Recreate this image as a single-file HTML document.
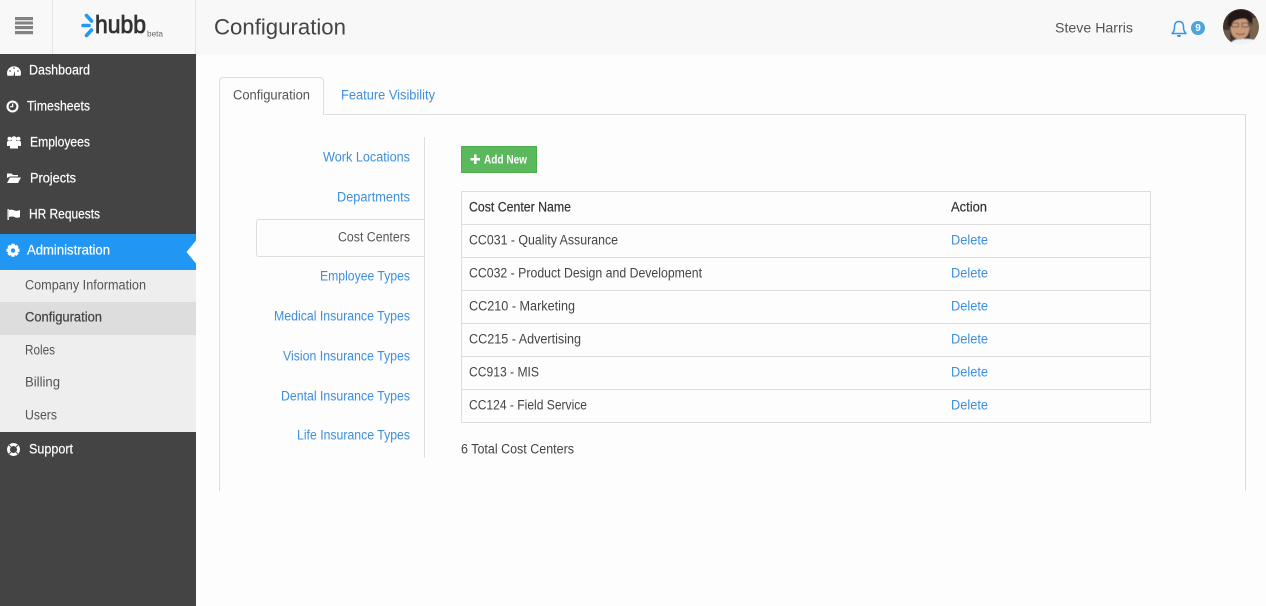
<!DOCTYPE html>
<html><head><meta charset="utf-8"><title>Configuration</title>
<style>
html,body{margin:0;padding:0;background:#fdfdfd;overflow:hidden}
svg{display:block}
text{font-family:"Liberation Sans",sans-serif;font-size:13.500px;fill:#444;transform:translateY(-.4px)}
.s text,text.s{fill:#fff;font-size:13.500px;stroke:#fff;stroke-width:.2px}
.b text,text.b{fill:#3d8fdd;font-size:13.500px}
.u text{fill:#555;font-size:13.500px}
.d text{fill:#333;font-size:13.500px}
</style></head><body>
<svg width="1266" height="606" viewBox="0 0 1266 606" xmlns="http://www.w3.org/2000/svg">
<defs><filter id="bl" x="-10%" y="-10%" width="120%" height="120%"><feGaussianBlur stdDeviation="0.600"/></filter></defs>
<rect width="1266" height="606" fill="#fdfdfd"/>
<!-- header -->
<rect width="1266" height="54.500" fill="#f8f8f8"/>
<rect x="52" y="0" width="1" height="54" fill="#e6e6e6"/>
<rect x="195" y="0" width="1" height="54" fill="#e6e6e6"/>
<g fill="#828282"><rect x="15" y="17" width="18" height="3.200"/><rect x="15" y="21.500" width="18" height="3"/><rect x="15" y="26" width="18" height="3.200"/><rect x="15" y="31" width="18" height="3.200"/></g>
<!-- logo -->
<g stroke="#1e9bf5" stroke-width="3.600" stroke-linecap="round" fill="none"><path d="M86.500 15.500 L91.500 21"/><path d="M83 25.500 H89"/><path d="M91.500 30 L86.500 35.500"/></g>
<text x="95" y="33.400" textLength="51" lengthAdjust="spacingAndGlyphs" style="font-size:25px;fill:#333;stroke:#333;stroke-width:.8px">hubb</text>
<text x="147" y="37" textLength="16" lengthAdjust="spacingAndGlyphs" style="font-size:8.500px;fill:#666">beta</text>
<text x="214" y="35" textLength="132" lengthAdjust="spacingAndGlyphs" style="font-size:22px;fill:#444">Configuration</text>
<text x="1055" y="33" textLength="78" lengthAdjust="spacingAndGlyphs" style="font-size:14px;fill:#555">Steve Harris</text>
<!-- bell -->
<path d="M1172 33.500 C1174.500 31 1174.500 29 1174.500 26.500 C1174.500 23.500 1176 21.500 1179 21.500 C1182 21.500 1183.500 23.500 1183.500 26.500 C1183.500 29 1183.500 31 1186 33.500 Z" fill="none" stroke="#2f96e6" stroke-width="1.500" stroke-linejoin="round"/>
<path d="M1177 35 a2 2 0 0 0 4 0 Z" fill="#2f96e6"/>
<circle cx="1198" cy="28" r="7" fill="#4ba3e0"/>
<text x="1198" y="31.500" text-anchor="middle" style="font-size:10px;font-weight:bold;fill:#fff">9</text>
<!-- avatar -->
<clipPath id="av"><circle cx="1241" cy="27" r="18"/></clipPath>
<g clip-path="url(#av)"><g filter="url(#bl)">
<rect x="1220" y="6" width="42" height="42" fill="#3f3029"/>
<rect x="1250" y="18" width="12" height="28" fill="#7a624e"/>
<rect x="1222" y="30" width="8" height="16" fill="#6e5a48"/>
<path d="M1229 47 C1231 40 1236 39 1242 39 C1250 39 1256 38 1260 46 Z" fill="#eef3f7"/>
<ellipse cx="1240" cy="28" rx="9.500" ry="11.500" fill="#c79a7a"/>
<path d="M1228 26 C1226 13 1234 10 1241 10 C1250 10 1254 15 1252 26 C1250 19 1246 18 1240 19 C1235 20 1232 21 1231 27 Z" fill="#211814"/>
<g fill="none" stroke="#6e5547" stroke-width="1"><rect x="1232" y="23" width="6.500" height="4" rx="1"/><rect x="1242" y="23" width="6.500" height="4" rx="1"/></g>
<path d="M1236 33.500 Q1240 35.500 1245 33.500" stroke="#96604c" stroke-width="1.300" fill="none"/>
</g></g>
<!-- sidebar -->
<rect x="0" y="54" width="196" height="552" fill="#444"/>
<rect x="0" y="234" width="196" height="36" fill="#2196f3"/>
<path d="M196 240.500 L186.500 252 L196 263.500 Z" fill="#fdfdfd"/>
<rect x="0" y="270" width="196" height="162" fill="#eee"/>
<rect x="0" y="302" width="196" height="33" fill="#ddd"/>
<!-- sidebar icons -->
<g fill="#fff">
<path d="M7.500 75.800 A7 7 0 1 1 20.500 75.800 Z"/>
<g fill="#444"><circle cx="10" cy="71" r=".8"/><circle cx="14" cy="68" r=".8"/><circle cx="18" cy="71" r=".8"/><path d="M13.300 75.800 L15 71 L15 75.800 Z"/></g>
<circle cx="12.500" cy="106.500" r="6"/>
<circle cx="12.500" cy="106.500" r="3.900" fill="#444"/>
<path d="M12 103.500 H13.300 V107.300 H10 V106.100 H12 Z"/>
<circle cx="9.500" cy="138.700" r="2"/><circle cx="14" cy="139" r="2.800"/><circle cx="18.500" cy="138.700" r="2"/>
<path d="M7 146 V142.500 Q7 141 8.500 141 H19.500 Q21 141 21 142.500 V146 H18 V148.500 H10 V146 Z"/>
<path d="M7 178 V173.500 H11.500 L13 175 H18 V176.500 H10 Z"/>
<path d="M7 183 L10 177.500 H21 L18 183 Z"/>
<rect x="7.500" y="209" width="1.300" height="11"/>
<path d="M9 210 Q12 209 14.500 210.500 Q17 211.500 20 210 V217 Q17 218.500 14.500 217 Q12 216 9 217 Z"/>
<path fill-rule="evenodd" d="M11.500 244.300 h3 l.4 1.800 1.600-.9 2.100 2.100-.9 1.600 1.800.4 v3 l-1.800.4 .9 1.600-2.100 2.100-1.600-.9-.4 1.800 h-3 l-.4-1.800-1.600.9-2.100-2.100 .9-1.600-1.800-.4 v-3 l1.800-.4-.9-1.600 2.100-2.100 1.600.9 Z M13 248.800 a2.200 2.200 0 1 0 .01 0 Z" transform="translate(0,-.5)"/>
<path fill-rule="evenodd" d="M13.500 443 a6.500 6.500 0 1 0 .01 0 Z M13.500 446 a3.500 3.500 0 1 1 -.01 0 Z"/>
<g stroke="#444" stroke-width=".9"><path d="M9 445 L11 447"/><path d="M18 445 L16 447"/><path d="M9 454 L11 452"/><path d="M18 454 L16 452"/></g>
</g>
<g class="s">
<text x="29" y="75" textLength="61" lengthAdjust="spacingAndGlyphs">Dashboard</text>
<text x="27" y="111" textLength="63" lengthAdjust="spacingAndGlyphs">Timesheets</text>
<text x="30" y="147" textLength="60" lengthAdjust="spacingAndGlyphs">Employees</text>
<text x="30" y="183" textLength="46" lengthAdjust="spacingAndGlyphs">Projects</text>
<text x="29" y="219" textLength="71" lengthAdjust="spacingAndGlyphs">HR Requests</text>
<text x="27" y="255" textLength="83" lengthAdjust="spacingAndGlyphs">Administration</text>
<text x="29" y="454" textLength="44" lengthAdjust="spacingAndGlyphs">Support</text>
</g>
<g class="u">
<text x="25" y="290" textLength="121" lengthAdjust="spacingAndGlyphs">Company Information</text>
<text x="25" y="322" textLength="77" lengthAdjust="spacingAndGlyphs" style="fill:#444;stroke:#444;stroke-width:.25px">Configuration</text>
<text x="25" y="355" textLength="30" lengthAdjust="spacingAndGlyphs">Roles</text>
<text x="25" y="387" textLength="35" lengthAdjust="spacingAndGlyphs">Billing</text>
<text x="25" y="420" textLength="32" lengthAdjust="spacingAndGlyphs">Users</text>
</g>
<!-- tabs -->
<g fill="#ddd">
<rect x="324" y="114" width="922" height="1"/>
<rect x="219" y="80" width="1" height="411"/>
<rect x="1245" y="114" width="1" height="377"/>
<rect x="323" y="80" width="1" height="35"/>
<path d="M219 81 a4 4 0 0 1 4-4 H320 a4 4 0 0 1 4 4 h-1 a3 3 0 0 0 -3-3 H223 a3 3 0 0 0 -3 3 Z"/>
</g>
<text x="233" y="100" textLength="77" lengthAdjust="spacingAndGlyphs" style="fill:#555">Configuration</text>
<text x="341" y="100" textLength="94" lengthAdjust="spacingAndGlyphs" class="b">Feature Visibility</text>
<!-- left nav -->
<path d="M424 219.500 H259 a2.500 2.500 0 0 0 -2.500 2.500 V254 a2.500 2.500 0 0 0 2.500 2.500 H424" fill="#fdfdfd" stroke="#ddd"/>
<rect x="424" y="137" width="1" height="321" fill="#ddd"/>
<g class="b">
<text x="323" y="162" textLength="87" lengthAdjust="spacingAndGlyphs">Work Locations</text>
<text x="337" y="202" textLength="73" lengthAdjust="spacingAndGlyphs">Departments</text>
<text x="320" y="281" textLength="90" lengthAdjust="spacingAndGlyphs">Employee Types</text>
<text x="274" y="321" textLength="136" lengthAdjust="spacingAndGlyphs">Medical Insurance Types</text>
<text x="283" y="361" textLength="127" lengthAdjust="spacingAndGlyphs">Vision Insurance Types</text>
<text x="281" y="401" textLength="129" lengthAdjust="spacingAndGlyphs">Dental Insurance Types</text>
<text x="297" y="440" textLength="113" lengthAdjust="spacingAndGlyphs">Life Insurance Types</text>
</g>
<text x="338" y="242" textLength="72" lengthAdjust="spacingAndGlyphs" style="fill:#555">Cost Centers</text>
<!-- button -->
<rect x="461.500" y="146.500" width="75" height="26" fill="#5cb85c" stroke="#4cae4c"/>
<path d="M470.500 160 h3.500 v-3.500 h2.500 v3.500 h3.500 v2.500 h-3.500 v3.500 h-2.500 v-3.500 h-3.500 Z" transform="translate(0,-2)" fill="#fff"/>
<text x="484" y="164" textLength="43" lengthAdjust="spacingAndGlyphs" style="font-size:12px;font-weight:bold;fill:#fff">Add New</text>
<!-- table -->
<g fill="none" stroke="#ddd">
<rect x="461.500" y="191.500" width="689" height="231"/>
<path d="M462 224.500 H1150 M462 257.500 H1150 M462 290.500 H1150 M462 323.500 H1150 M462 356.500 H1150 M462 389.500 H1150"/>
</g>
<g class="d">
<text x="469" y="212" textLength="102" lengthAdjust="spacingAndGlyphs" style="stroke:#333;stroke-width:.2px">Cost Center Name</text>
<text x="951" y="212" textLength="36" lengthAdjust="spacingAndGlyphs" style="stroke:#333;stroke-width:.2px">Action</text>
</g>
<g>
<text x="469" y="245" textLength="149" lengthAdjust="spacingAndGlyphs">CC031 - Quality Assurance</text>
<text x="469" y="278" textLength="233" lengthAdjust="spacingAndGlyphs">CC032 - Product Design and Development</text>
<text x="469" y="311" textLength="106" lengthAdjust="spacingAndGlyphs">CC210 - Marketing</text>
<text x="469" y="344" textLength="112" lengthAdjust="spacingAndGlyphs">CC215 - Advertising</text>
<text x="469" y="377" textLength="70" lengthAdjust="spacingAndGlyphs">CC913 - MIS</text>
<text x="469" y="410" textLength="118" lengthAdjust="spacingAndGlyphs">CC124 - Field Service</text>
<text x="461" y="454" textLength="113" lengthAdjust="spacingAndGlyphs">6 Total Cost Centers</text>
</g>
<g class="b">
<text x="951" y="245" textLength="37" lengthAdjust="spacingAndGlyphs">Delete</text>
<text x="951" y="278" textLength="37" lengthAdjust="spacingAndGlyphs">Delete</text>
<text x="951" y="311" textLength="37" lengthAdjust="spacingAndGlyphs">Delete</text>
<text x="951" y="344" textLength="37" lengthAdjust="spacingAndGlyphs">Delete</text>
<text x="951" y="377" textLength="37" lengthAdjust="spacingAndGlyphs">Delete</text>
<text x="951" y="410" textLength="37" lengthAdjust="spacingAndGlyphs">Delete</text>
</g>
</svg>
</body></html>
